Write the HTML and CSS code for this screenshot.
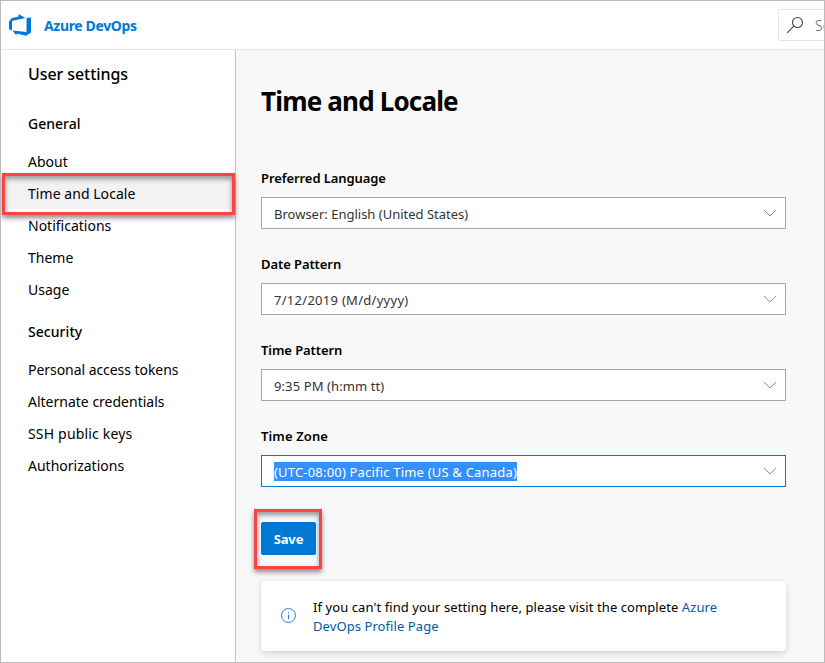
FILE: index.html
```html
<!DOCTYPE html>
<html lang="en">
<head>
<meta charset="utf-8">
<title>User settings - Azure DevOps</title>
<link rel="stylesheet" href="styles.css">
</head>
<body>
<div class="app">
  <header class="topbar">
    <svg class="logo" viewBox="0 0 24 24" width="24" height="24"><path fill="#0078d7" d="M1 8.500 3.500 5.200 10.500 3.500V1l7 4L4 8v9.500L1 16ZM18.500 5 23 4.500V19.500l-5 3.200-9.500-2.200V22.700L4.500 17.500l14 1.500Z"/></svg>
    <span class="brand">Azure DevOps</span>
    <div class="search">
      <svg viewBox="0 0 18 18" width="18" height="18" fill="none" stroke="#444" stroke-width="1.100"><circle cx="11.500" cy="6.500" r="5"/><path d="M7.800 10.200 1.200 16.800"/></svg>
      <span class="hint">Search</span>
    </div>
  </header>
  <div class="body">
    <nav class="sidebar">
      <h2 class="side-title">User settings</h2>
      <h3 class="group general">General</h3>
      <a class="item">About</a>
      <a class="item selected">Time and Locale<i class="mark mark-nav"></i></a>
      <a class="item">Notifications</a>
      <a class="item">Theme</a>
      <a class="item">Usage</a>
      <h3 class="group security">Security</h3>
      <a class="item tokens">Personal access tokens</a>
      <a class="item">Alternate credentials</a>
      <a class="item keys">SSH public keys</a>
      <a class="item">Authorizations</a>
    </nav>
    <main class="content">
      <h1 class="title">Time and Locale</h1>
      <section class="field">
        <div class="label">Preferred Language</div>
        <div class="select"><span>Browser: English (United States)</span><svg class="chev" viewBox="0 0 14 8" width="14" height="8"><path d="M1 1l6 6 6-6"/></svg></div>
      </section>
      <section class="field">
        <div class="label">Date Pattern</div>
        <div class="select"><span class="date">7/12/2019 (M/d/yyyy)</span><svg class="chev" viewBox="0 0 14 8" width="14" height="8"><path d="M1 1l6 6 6-6"/></svg></div>
      </section>
      <section class="field">
        <div class="label">Time Pattern</div>
        <div class="select"><span class="time">9:35 PM (h:mm tt)</span><svg class="chev" viewBox="0 0 14 8" width="14" height="8"><path d="M1 1l6 6 6-6"/></svg></div>
      </section>
      <section class="field">
        <div class="label zone">Time Zone</div>
        <div class="select focused"><span class="picked">(UTC-08:00) Pacific Time (US &amp; Canada)</span><svg class="chev" viewBox="0 0 14 8" width="14" height="8"><path d="M1 1l6 6 6-6"/></svg></div>
      </section>
      <div class="save">Save<i class="mark mark-save"></i></div>
      <div class="card">
        <svg viewBox="0 0 16 16" width="16" height="16" fill="none" stroke="#2b7cd3"><circle cx="7.500" cy="7.500" r="7"/><path d="M7.500 6.500v4.500M7.500 4v1.200"/></svg>
        <p class="note">If you can't find your setting here, please visit the complete <a class="link">Azure</a><br><a class="link">DevOps Profile Page</a></p>
      </div>
    </main>
  </div>
</div>
</body>
</html>
```
FILE: styles.css
```css
* { box-sizing: border-box; }
body { margin: 0; font: 14px/20px "Noto Sans", "Open Sans", sans-serif; color: #000; }
h1, h2, h3, p { margin: 0; font-weight: 400; }
.app { width: 825px; height: 663px; border: 1px solid #bbb; background: #fff; overflow: hidden; display: flex; flex-direction: column; }
.topbar { height: 49px; flex: none; border-bottom: 1px solid #e5e5e5; display: flex; align-items: center; padding-left: 7px; }
.logo { flex: none; }
.brand { margin-left: 12px; padding-top: 2px; font-size: 14px; font-weight: 700; color: #0078d7; letter-spacing: -0.35px; white-space: nowrap; }
.search { margin-left: auto; width: 46px; height: 32px; flex: none; border: 1px solid #e5e5e5; border-right: 0; border-radius: 2px 0 0 2px; display: flex; align-items: center; padding-left: 7px; overflow: hidden; }
.search svg { flex: none; }
.hint { margin-left: 11px; padding-top: 2px; font-size: 14px; font-weight: 300; color: #666; }
.body { flex: 1; min-height: 0; display: flex; }
.sidebar { width: 235px; flex: none; border-right: 1px solid #c4c4c4; }
.side-title { padding: 12px 0 0 27px; height: 58px; font-size: 16px; line-height: 24px; font-weight: 500; letter-spacing: -0.08px; }
.group { padding-left: 27px; font-size: 14px; font-weight: 500; line-height: 20px; }
.general { height: 37px; padding-top: 6px; }
.security { height: 48px; padding-top: 17px; letter-spacing: 0.05px; }
.item { display: flex; align-items: center; height: 32px; padding: 2px 0 0 27px; position: relative; white-space: nowrap; }
.tokens { letter-spacing: -0.05px; }
.keys { letter-spacing: 0.18px; }
.selected { background: #f2f2f2; letter-spacing: 0.05px; }
.mark { position: absolute; border: 3px solid #fb4343; box-shadow: 0 3px 5px rgba(0,0,0,.45), inset 0 3px 5px rgba(0,0,0,.4); z-index: 1; }
.mark-nav { left: 1px; top: -4px; width: 233px; height: 42px; }
.mark-save { left: -7px; top: -13px; width: 68px; height: 60px; }
.content { flex: 1; background: #f8f8f8; padding: 32px 38px 0 25px; }
.title { font-size: 26px; line-height: 38px; font-weight: 700; letter-spacing: -0.82px; height: 86px; white-space: nowrap; }
.field { height: 86px; }
.label { height: 29px; font-weight: 600; font-size: 13px; letter-spacing: -0.08px; }
.zone { letter-spacing: 0.12px; }
.select { height: 32px; border: 1px solid #a6a6a6; background: #fff; display: flex; align-items: center; justify-content: space-between; padding: 2px 8px 0 12px; font-size: 13px; color: #333; white-space: nowrap; }
.date { letter-spacing: 0.28px; }
.time { letter-spacing: 0.1px; }
.focused { border-color: #0078d4; }
.picked { background: #3390ff; color: #fff; line-height: 19px; letter-spacing: 0.19px; margin-top: -2px; padding-top: 1px; height: 19px; }
.chev { fill: none; stroke: #b0826c; margin-top: -2px; }
.save { position: relative; margin-top: 10px; width: 55px; height: 33px; border-radius: 2px; background: #0078d4; color: #fff; font-size: 13px; font-weight: 700; display: flex; align-items: center; justify-content: center; letter-spacing: -0.15px; padding-top: 1px; }
.card { margin-top: 26px; height: 70px; background: #fff; border-radius: 4px; box-shadow: 0 3px 7px rgba(0,0,0,.13), 0 0 2px rgba(0,0,0,.1); display: flex; align-items: center; padding-left: 20px; }
.note { margin-left: 16px; padding-top: 2px; font-size: 13px; line-height: 19px; letter-spacing: 0.08px; white-space: nowrap; }
.link { color: #005a9e; }
```
